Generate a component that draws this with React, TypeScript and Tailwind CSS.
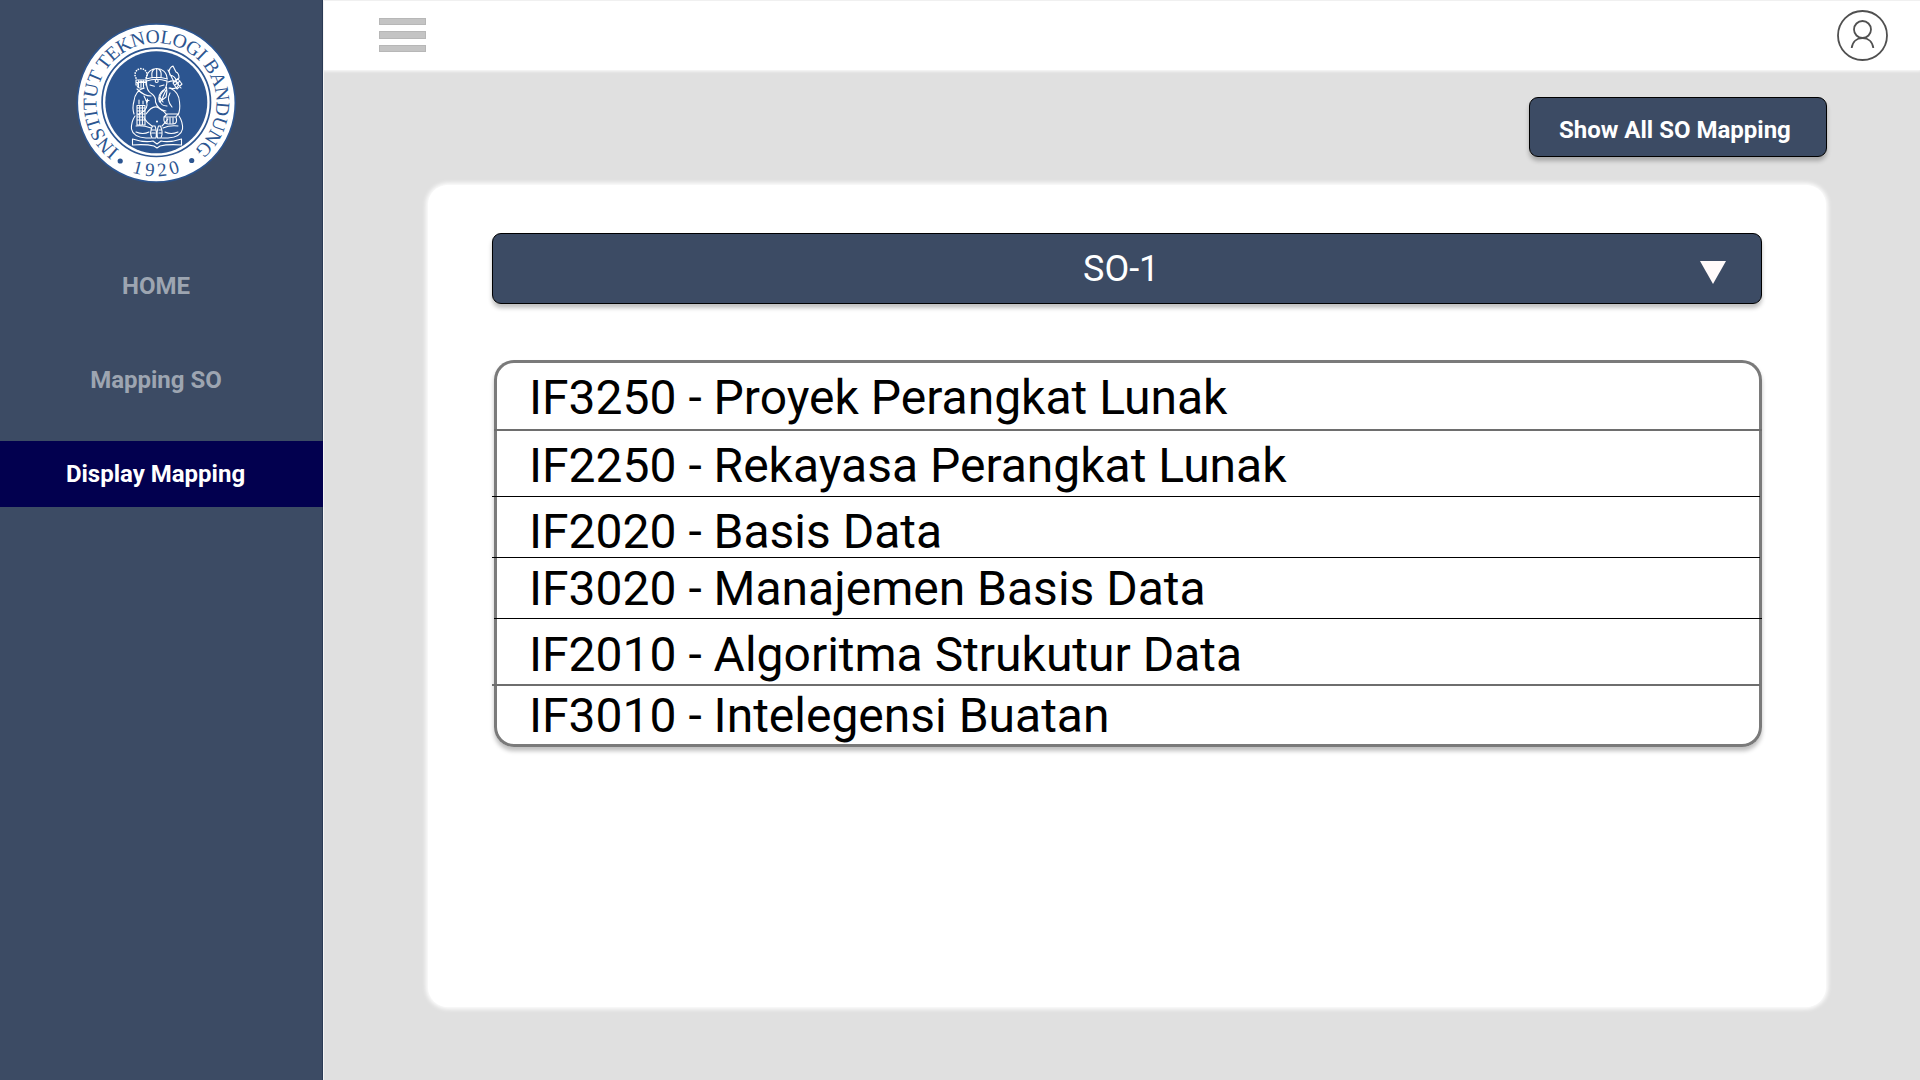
import type { ReactNode } from "react";

type Course = { label: string; row: string; line: string };

const courses: Course[] = [
  { label: "IF3250 - Proyek Perangkat Lunak", row: "h-[68px] pt-[11px]", line: "left-0 right-0 h-[2px] bg-[#6e6e6e]" },
  { label: "IF2250 - Rekayasa Perangkat Lunak", row: "h-[66px] pt-[11px]", line: "-left-[2px] right-[2px] h-px bg-black" },
  { label: "IF2020 - Basis Data", row: "h-[61px] pt-[11px]", line: "-left-[2px] right-[2px] h-px bg-black" },
  { label: "IF3020 - Manajemen Basis Data", row: "h-[61px] pt-[7px]", line: "left-0 right-0 h-px bg-black" },
  { label: "IF2010 - Algoritma Strukutur Data", row: "h-[67px] pt-[12px]", line: "-left-[2px] right-[2px] h-[2px] bg-[#6e6e6e]" },
  { label: "IF3010 - Intelegensi Buatan", row: "h-[61px] pt-[6px]", line: "" },
];

function Seal() {
  return (
    <svg viewBox="0 0 190 190" className="h-[190px] w-[190px]" fill="none">
      <circle cx="96.3" cy="93" r="79" fill="#fff" stroke="#2c5590" strokeWidth="1.6" />
      <circle cx="96.3" cy="92.3" r="54.2" stroke="#2c5590" strokeWidth="1.7" />
      <circle cx="96.3" cy="92.3" r="51" fill="#2c5590" />
      <defs>
        <path id="sealTop" d="M59.5 140.5 A60 60 0 1 1 134.4 139.5" />
        <path id="sealYear" d="M46.3 146.9 A74 74 0 0 0 146.3 146.9" />
      </defs>
      <g fill="#2c5590" fontFamily="'Liberation Serif', serif">
        <text fontSize="19.5" textLength="296" lengthAdjust="spacing">
          <textPath href="#sealTop">INSTITUT TEKNOLOGI BANDUNG</textPath>
        </text>
        <text fontSize="19" letterSpacing="3.8" textAnchor="middle">
          <textPath href="#sealYear" startOffset="51.5%">1920</textPath>
        </text>
        <circle cx="60.2" cy="151" r="2.6" />
        <circle cx="131.7" cy="150.5" r="2.6" />
      </g>
      <g stroke="#fff" strokeWidth="1.1" strokeLinecap="round" strokeLinejoin="round">
        <path d="M86.5 69 C86.5 55 107 55 107 69 M86 69 Q96.5 65.5 107.5 69 M86.5 71 Q96.5 67.5 107 71 M92 67 Q91 61 94.5 59 M101 67 Q102 61 98.5 59 M96.7 58.5 V68" />
        <circle cx="96.7" cy="71" r="1.5" />
        <path d="M86.5 71 Q86 81 92 84 Q96 87 95.5 92 M107 71 Q107 78 102.5 82 Q99 86 100 91 Q101 96 107 96 M95.5 92 Q98 100 106 101" />
        <path d="M90 75 L94.5 76.2 M99.5 76.2 L104 75" />
        <path d="M103.5 80 Q97 85 99.5 92 L106 87 Q107.5 82 106.5 77 M101 91 L106 80 M99.5 87 L103 92" />
        <path d="M85.5 72 Q78 70 77 75 Q77 79 84 78 M108 72 Q116 69 118.5 74 Q118 80 109 78" />
        <path d="M84 78 Q75 81 74 91 Q72 98 74 104 M77 79 Q84 86 91 86 M84 86 Q90 96 84 101 L78 105 M110 78 Q119 82 119.5 92 Q120.5 100 118 105 M110 83 Q106 90 112 97" />
        <path d="M86 104 Q93 94 99 98 Q104 101 107 105 M84 108 Q87 113 92 116 M108 109 Q105 113 102 116" />
        <circle cx="97" cy="111.5" r=".5" />
        <path d="M87.5 89 V92 M86 90.5 H89" />
        <path d="M77 95.5 H85 V115 H77 Z M79 94 V90 M83 94 V91 M77 98 H85 M77 101 H85 M77 104 H85 M77 107 H85 M77 110 H85 M79.7 96 V115 M82.4 96 V115" />
        <path d="M104 107 H116 Q118 114 113 114 H108 Q103 114 104 107 M104 107 L107 104 H118 L116 107 M107 108 V113 M110 108 V113 M113 108 V113" />
        <path d="M75 106 Q71 112 71.5 119 Q73 127 86 128 H91 M119 106 Q123 112 122.5 119 Q121 127 108 128 H102 M76 116 Q83 115 91 118 M118 116 Q110 115 103 118 M89 122 Q83 125 76 122 M105 122 Q111 125 118 122" />
        <path d="M92.5 116 Q89 123 92 128 H96 Q97 121 95 116 Z M100.5 116 Q103.5 123 101 128 H97.5 Q96.5 121 98.5 116 Z M92 120 H95 M92 123 H95 M99 120 H102 M99 123 H102" />
        <path d="M72.5 129 Q85 133 93 131 L97 134 L101 131 Q109 133 121.5 129 V135 Q108 134 100 136 L97 138 L94 136 Q86 134 72.5 135 Z" />
        <path d="M76 75 V70 H86 V75 M76 72.5 H86 M78.5 71 V77 M81 71 V77 M83.5 71 V77" />
        <path d="M76 68 A6 6 0 1 1 86 68" strokeDasharray=".1 2.4" strokeWidth="1.7" />
        <path d="M109 61 Q110 57 113 56 L116 62 Q119 63 119 68 L116 70 Q115 66 110 65 Z M108 60 L114 72 M115 71 L121 78 M113 73 L118 69 L122 74 L117 79 Z M115 75 L120 71" />
      </g>
    </svg>
  );
}

function NavItem({ children, active = false }: { children: ReactNode; active?: boolean }) {
  return (
    <a
      className={
        active
          ? "flex h-[66px] w-full items-center justify-center bg-[#02004f] pr-[12px] text-white"
          : "flex h-[66px] w-full items-center justify-center pr-[11px] text-[#9da5b1]"
      }
    >
      {children}
    </a>
  );
}

export default function App() {
  return (
    <div className="flex h-[1080px] w-[1920px] overflow-hidden bg-[#e0e0e0] font-['Roboto',sans-serif]">
      <aside className="z-10 flex w-[324px] shrink-0 flex-col border-r border-[#f4f4f4] bg-[#3c4b64] shadow-[inset_-1px_0_0_#2a3a55]">
        <div className="h-[253px] pt-[10px] pl-[60px]">
          <Seal />
        </div>
        <nav className="flex flex-col gap-[28px] text-2xl font-bold">
          <NavItem>HOME</NavItem>
          <NavItem>Mapping SO</NavItem>
          <NavItem active>Display Mapping</NavItem>
        </nav>
      </aside>

      <main className="flex min-w-0 flex-1 flex-col">
        <header className="flex h-[70px] items-start justify-between border-t border-[#f0f0f0] bg-white pr-[32px] pl-[55px] shadow-[0_0_3px_1px_#fff]">
          <button className="flex flex-col gap-[6px] pt-[17px]" aria-label="Menu">
            <span className="h-[7px] w-[47px] border border-[#b7b7b7] bg-[#c4c4c4]" />
            <span className="h-[8px] w-[47px] border border-[#b7b7b7] bg-[#c4c4c4]" />
            <span className="h-[7px] w-[47px] border border-[#b7b7b7] bg-[#c4c4c4]" />
          </button>
          <svg viewBox="0 0 51 51" className="mt-[9px] h-[51px] w-[51px]" fill="none" stroke="#505050" strokeWidth="1.8">
            <circle cx="25.5" cy="25.5" r="24.5" />
            <circle cx="25.5" cy="19.5" r="8.5" />
            <path d="M14.7 38 C15.5 31.5 20 28 25.5 28 S35.5 31.5 36.3 38" />
          </svg>
        </header>

        <div className="flex flex-col items-end pt-[27px] pr-[93px]">
          <button className="flex h-[60px] w-[298px] items-center rounded-[9px] border border-black bg-[#3c4b64] pt-[5px] pl-[29px] text-2xl font-bold whitespace-nowrap text-white shadow-[0_4px_4px_rgba(0,0,0,0.25)]">
            Show All SO Mapping
          </button>

          <section className="mt-[28px] mr-px h-[822px] w-[1398px] rounded-[20px] bg-white px-[64px] pt-[48px] shadow-[0_0_4px_2px_#fff]">
            <button className="flex h-[71px] w-[1270px] items-center rounded-[9px] border border-black bg-[#3c4b64] pr-[35px] pl-[590px] text-4xl text-white shadow-[0_4px_4px_rgba(0,0,0,0.25)]">
              <span className="flex-1 text-left">SO-1</span>
              <svg viewBox="0 0 26 23" className="mt-[8px] h-[23px] w-[26px]" fill="#fffafa">
                <path d="M0 0 H26 L13 23 Z" />
              </svg>
            </button>

            <ul className="mt-[56px] ml-[2px] w-[1268px] rounded-[20px] bg-white pt-[3px] shadow-[inset_0_0_0_3px_#7a7a7a,0_4px_4px_rgba(0,0,0,0.25)]">
              {courses.map((c) => (
                <li key={c.label} className={`relative pl-[35px] text-5xl whitespace-nowrap text-black ${c.row}`}>
                  {c.label}
                  {c.line && <span className={`absolute bottom-0 ${c.line}`} />}
                </li>
              ))}
            </ul>
          </section>
        </div>
      </main>
    </div>
  );
}
